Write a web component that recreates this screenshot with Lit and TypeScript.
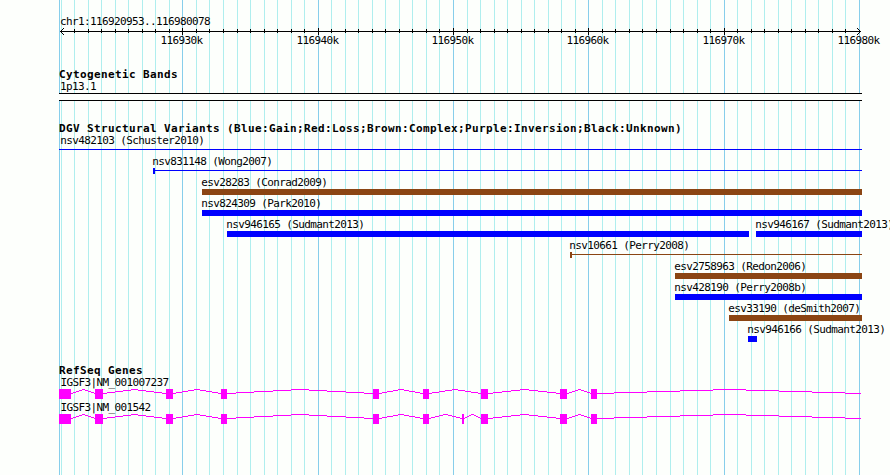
import { LitElement, html, svg, css } from "lit";
import { customElement } from "lit/decorators.js";

const START = 116920953;
const STOP = 116980078;
const PAD_LEFT = 60;
const SCALE = 800 / (STOP - START + 1);
const LEFT = 59;
const RIGHT = 862;

const BLUE = "#0000ff";
const BROWN = "#8b4513";

const toX = (pos: number) => Math.round(PAD_LEFT + (pos - START) * SCALE);

interface Tick {
  x: number;
  major: boolean;
  label: string;
}

const ticks: Tick[] = [];
for (let k = 116921; k <= 116980; k++) {
  ticks.push({ x: toX(k * 1000), major: k % 10 === 0, label: `${k}k` });
}

interface Variant {
  name: string;
  x: number;
  end: number;
  row: number;
  color: string;
  thin?: boolean;
}

const variants: Variant[] = [
  { name: "nsv831148 (Wong2007)", x: 153, end: RIGHT, row: 0, color: BLUE, thin: true },
  { name: "esv28283 (Conrad2009)", x: 202, end: RIGHT, row: 1, color: BROWN },
  { name: "nsv824309 (Park2010)", x: 202, end: RIGHT, row: 2, color: BLUE },
  { name: "nsv946165 (Sudmant2013)", x: 227, end: 749, row: 3, color: BLUE },
  { name: "nsv946167 (Sudmant2013)", x: 756, end: RIGHT, row: 3, color: BLUE },
  { name: "nsv10661 (Perry2008)", x: 570, end: RIGHT, row: 4, color: BROWN, thin: true },
  { name: "esv2758963 (Redon2006)", x: 675, end: RIGHT, row: 5, color: BROWN },
  { name: "nsv428190 (Perry2008b)", x: 675, end: RIGHT, row: 6, color: BLUE },
  { name: "esv33190 (deSmith2007)", x: 729, end: RIGHT, row: 7, color: BROWN },
  { name: "nsv946166 (Sudmant2013)", x: 748, end: 757, row: 8, color: BLUE },
];

const exons = [
  [59, 71],
  [95, 103],
  [166, 173],
  [221, 227],
  [373, 379],
  [423, 429],
  [481, 488],
  [560, 567],
  [591, 597],
];

const genes = [
  { name: "IGSF3|NM_001007237", exons },
  {
    name: "IGSF3|NM_001542",
    exons: [...exons.slice(0, 6), [462, 464], ...exons.slice(6)],
  },
];

// hat shaped intron, drawn as one pixel steps that climb 4px and fall again
function intron(from: number, to: number) {
  const step = (to - from) / 8;
  let d = "";
  let x = from;
  for (let i = 0; i <= 8; i++) {
    const next = i === 8 ? to : Math.round(from + (i + 0.5) * step);
    const y = 13 + Math.abs(4 - i);
    d += `M${x} ${y}H${next}v1H${x}z`;
    x = next;
  }
  return d;
}

@customElement("app-root")
export default class AppRoot extends LitElement {
  static styles = css`
    :host {
      display: block;
      position: relative;
      width: 890px;
      height: 475px;
      overflow: hidden;
      background: #fdfffc;
    }

    .grid {
      position: absolute;
      top: 0;
      left: 0;
    }

    .tracks {
      position: relative;
      display: flex;
      flex-direction: column;
    }

    svg {
      display: block;
      flex: none;
      overflow: hidden;
    }

    rect,
    path {
      shape-rendering: crispEdges;
    }

    text {
      font-family: "DejaVu Sans Mono", monospace;
      font-size: 11px;
      letter-spacing: -0.622px;
      fill: #000;
      white-space: pre;
    }

    .title {
      font-size: 11px;
      font-weight: bold;
      letter-spacing: 0.378px;
    }

    .minor {
      fill: #afeeee;
    }

    .major {
      fill: #87ceeb;
    }

    .gene {
      fill: #ff00ff;
    }
  `;

  private _grid() {
    return html`<svg class="grid" width="890" height="475">
      ${ticks.map(
        (t) => svg`<rect class=${t.major ? "major" : "minor"} x=${t.x} y="0" width="1" height="475" />`
      )}
      <rect class="major" x=${LEFT} y="0" width="1" height="475" />
    </svg>`;
  }

  private _ruler() {
    return html`<svg width="890" height="60">
      <text x="60" y="25">chr1:${START}..${STOP}</text>
      <rect x="60" y="31" width="801" height="1" />
      <path d="M61 30h1v-1h1v-1h1v1h-1v1h-1v1h-1zM61 32h1v1h1v1h1v1h-1v-1h-1v-1h-1z" />
      <path d="M860 31h-1v-1h-1v-1h-1v-1h1v1h1v1h1zM860 32h-1v1h-1v1h-1v1h1v-1h1v-1h1z" />
      ${ticks
        .filter((t) => t.x > 64 && t.x < 856)
        .map((t) =>
          t.major
            ? svg`<rect x=${t.x} y="28" width="1" height="7" />`
            : svg`<rect x=${t.x} y="29" width="1" height="4" />`
        )}
      ${ticks
        .filter((t) => t.major)
        .map((t) => svg`<text x=${t.x - 21.6} y="44">${t.label}</text>`)}
    </svg>`;
  }

  private _bands() {
    return html`<svg width="890" height="60">
      <text class="title" x="59" y="18">Cytogenetic Bands</text>
      <text x="60" y="30">1p13.1</text>
      <rect x=${LEFT} y="33" width=${RIGHT - LEFT} height="8" />
      <rect x=${LEFT} y="34" width=${RIGHT - LEFT} height="6" fill="#fdfffc" />
    </svg>`;
  }

  private _variant(v: Variant) {
    const y = 48 + v.row * 21;
    return svg`
      <text x=${v.x - 0.7} y=${y - 3}>${v.name}</text>
      ${
        v.thin
          ? svg`<rect x=${v.x} y=${y} width="2" height="6" fill=${v.color} />
              <rect x=${v.x} y=${y + 2} width=${v.end - v.x} height="1" fill=${v.color} />`
          : svg`<rect x=${v.x} y=${y} width=${v.end - v.x} height="6" fill=${v.color} />`
      }
    `;
  }

  private _variants() {
    return html`<svg width="890" height="240">
      <text class="title" x="59" y="12">DGV Structural Variants (Blue:Gain;Red:Loss;Brown:Complex;Purple:Inversion;Black:Unknown)</text>
      <text x="60.3" y="24">nsv482103 (Schuster2010)</text>
      <rect x=${LEFT} y="29" width=${RIGHT - LEFT} height="1" fill=${BLUE} />
      ${variants.map((v) => this._variant(v))}
    </svg>`;
  }

  private _gene(gene: { name: string; exons: number[][] }) {
    return html`<svg width="890" height="25">
      <text x="60.6" y="10">${gene.name}</text>
      ${gene.exons.map(([from, to], i) => {
        const next = gene.exons[i + 1]?.[0] ?? 861;
        return svg`<rect class="gene" x=${from} y="13" width=${to - from} height="10" />
          <path class="gene" d=${intron(to, next)} />`;
      })}
    </svg>`;
  }

  render() {
    return html`
      ${this._grid()}
      <div class="tracks">
        ${this._ruler()} ${this._bands()} ${this._variants()}
        <svg width="890" height="16">
          <text class="title" x="59" y="14">RefSeq Genes</text>
        </svg>
        ${genes.map((g) => this._gene(g))}
      </div>
    `;
  }
}
